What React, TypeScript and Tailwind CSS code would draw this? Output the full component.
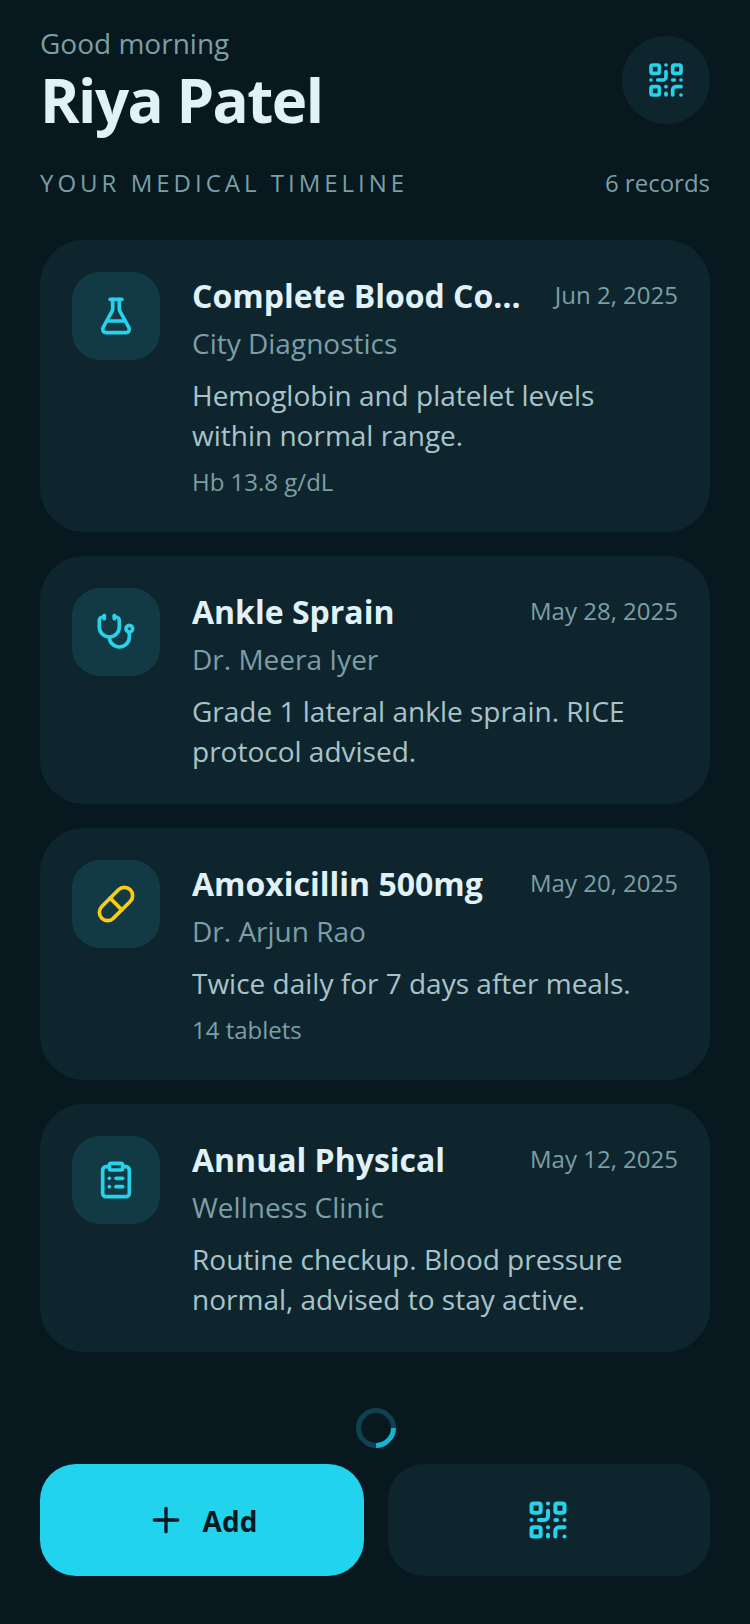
import { ClipboardList, FlaskConical, Pill, Plus, QrCode, Stethoscope } from "lucide-react";
import type { LucideIcon } from "lucide-react";

interface RecordItem {
  title: string;
  date: string;
  source: string;
  note: string;
  meta?: string;
  icon: LucideIcon;
  iconClass: string;
}

const records: RecordItem[] = [
  {
    title: "Complete Blood Count",
    date: "Jun 2, 2025",
    source: "City Diagnostics",
    note: "Hemoglobin and platelet levels within normal range.",
    meta: "Hb 13.8 g/dL",
    icon: FlaskConical,
    iconClass: "text-[#26d3ea]",
  },
  {
    title: "Ankle Sprain",
    date: "May 28, 2025",
    source: "Dr. Meera Iyer",
    note: "Grade 1 lateral ankle sprain. RICE protocol advised.",
    icon: Stethoscope,
    iconClass: "text-[#26d3ea]",
  },
  {
    title: "Amoxicillin 500mg",
    date: "May 20, 2025",
    source: "Dr. Arjun Rao",
    note: "Twice daily for 7 days after meals.",
    meta: "14 tablets",
    icon: Pill,
    iconClass: "text-[#facc15]",
  },
  {
    title: "Annual Physical",
    date: "May 12, 2025",
    source: "Wellness Clinic",
    note: "Routine checkup. Blood pressure normal, advised to stay active.",
    icon: ClipboardList,
    iconClass: "text-[#26d3ea]",
  },
];

function RecordCard({ record }: { record: RecordItem }) {
  const Icon = record.icon;
  return (
    <div className="flex gap-[32px] rounded-[44px] bg-[#0f252e] p-[32px]">
      <div className="flex h-[88px] w-[88px] shrink-0 items-center justify-center rounded-[28px] bg-[#113a44]">
        <Icon className={`h-[40px] w-[40px] ${record.iconClass}`} strokeWidth={2.2} />
      </div>
      <div className="min-w-0 flex-1">
        <div className="flex items-center justify-between gap-[24px]">
          <h3 className="min-w-0 flex-1 truncate text-[32px] leading-[48px] font-bold text-[#e0f2f8]">{record.title}</h3>
          <span className="shrink-0 pb-[2px] text-[24px] leading-[36px] text-[#7c9ea6]">{record.date}</span>
        </div>
        <p className="mt-[3px] text-[28px] leading-[40px] text-[#7c9ea6]">{record.source}</p>
        <p className="mt-[12px] mb-[1px] text-[28px] leading-[40px] text-[#a8c4cb]">{record.note}</p>
        {record.meta && <p className="mt-[9px] text-[24px] leading-[36px] text-[#7c9ea6]">{record.meta}</p>}
      </div>
    </div>
  );
}

export default function App() {
  return (
    <div className="flex min-h-[1624px] flex-col bg-[#07191f] px-[40px] font-['Open_Sans',sans-serif]">
      <header className="flex items-center justify-between pt-[23px]">
        <div>
          <p className="text-[28px] leading-[40px] text-[#7c9ea6]">Good morning</p>
          <h1 className="mt-[1px] text-[60px] leading-[72px] font-bold tracking-[-1.5px] text-[#e0f2f8]">Riya Patel</h1>
        </div>
        <button className="flex h-[88px] w-[88px] items-center justify-center rounded-full bg-[#0f252e]">
          <QrCode className="h-[40px] w-[40px] text-[#26d3ea]" strokeWidth={2.2} />
        </button>
      </header>

      <div className="mt-[29px] flex items-center justify-between">
        <span className="text-[24px] leading-[36px] tracking-[4px] text-[#7c9ea6]">YOUR MEDICAL TIMELINE</span>
        <span className="text-[24px] leading-[36px] text-[#7c9ea6]">6 records</span>
      </div>

      <div className="mt-[39px] flex flex-col gap-[24px]">
        {records.map((record) => (
          <RecordCard key={record.title} record={record} />
        ))}
      </div>

      <div className="mt-[56px] flex justify-center">
        <div className="ml-[2px] h-[40px] w-[40px] rotate-[135deg] rounded-full border-[5px] border-[#0f4250] border-t-[#16b3d1]" />
      </div>

      <div className="mt-[16px] flex gap-[24px]">
        <button className="flex h-[112px] w-[324px] items-center justify-center gap-[16px] rounded-[36px] bg-[#22d3ee] text-[#07191f]">
          <Plus className="mr-[1px] -ml-[1px] h-[40px] w-[40px]" />
          <span className="pt-[2px] text-[28px] font-bold">Add</span>
        </button>
        <button className="flex h-[112px] flex-1 items-center justify-center rounded-[36px] bg-[#0f252e] pr-[2px]">
          <QrCode className="h-[44px] w-[44px] text-[#26d3ea]" strokeWidth={2.2} />
        </button>
      </div>
    </div>
  );
}
